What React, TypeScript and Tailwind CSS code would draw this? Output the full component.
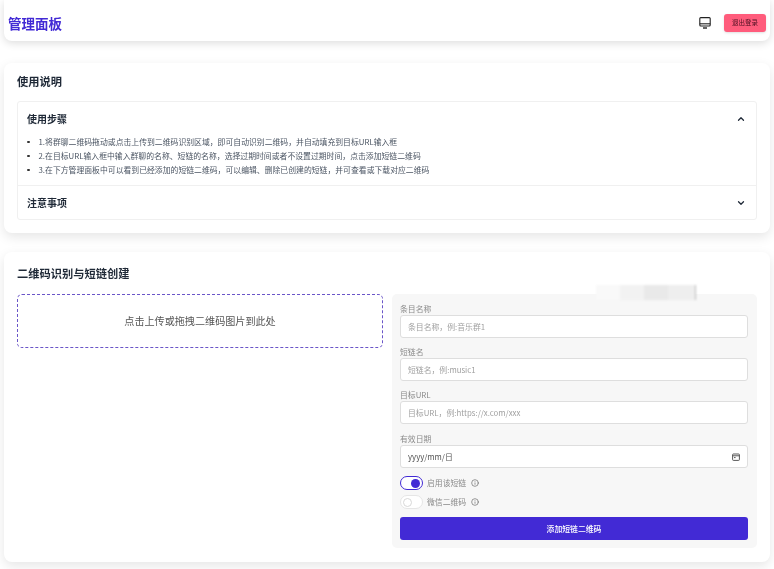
import React from 'react'
import { ChevronDown, ChevronUp, Info } from 'lucide-react'

const steps = [
  '1.将群聊二维码拖动或点击上传到二维码识别区域，即可自动识别二维码，并自动填充到目标URL输入框',
  '2.在目标URL输入框中输入群聊的名称、短链的名称，选择过期时间或者不设置过期时间，点击添加短链二维码',
  '3.在下方管理面板中可以看到已经添加的短链二维码，可以编辑、删除已创建的短链，并可查看或下载对应二维码',
]

function Field({ label, placeholder }: { label: string; placeholder: string }) {
  return (
    <div className="mb-[7px]">
      <div className="h-[13px] text-[7.85px] leading-[13px] text-[#8a8a8a]">{label}</div>
      <input
        readOnly
        placeholder={placeholder}
        className="block h-[23px] w-full rounded-[3px] border border-[#dedede] bg-white px-[7px] text-[7.85px] outline-none placeholder:text-[#a0a0a0]"
      />
    </div>
  )
}

function Toggle({ on, label }: { on?: boolean; label: string }) {
  return (
    <div className="flex h-[14px] items-center">
      {on ? (
        <div className="flex h-[14px] w-[23px] items-center justify-end rounded-full border border-[#422ad5] bg-white pr-[2px]">
          <div className="h-[9px] w-[9px] rounded-full bg-[#422ad5]" />
        </div>
      ) : (
        <div className="flex h-[14px] w-[23px] items-center rounded-full border border-[#e6e6e6] bg-white pl-[2px]">
          <div className="h-[9px] w-[9px] rounded-full border border-[#d8d8d8]" />
        </div>
      )}
      <span className="ml-[4px] text-[7.85px] leading-[14px] text-[#8a8a8a]">{label}</span>
      <Info size={8} className="ml-[5px] text-[#666]" />
    </div>
  )
}

export default function App() {
  return (
    <div className="h-[569px] overflow-hidden bg-white px-[4px] font-['Noto_Sans_CJK_SC','Inter',sans-serif] text-[#1f2937] blur-[0.35px]">
      {/* Navbar */}
      <div className="flex h-[41px] items-center justify-between rounded-b-lg bg-white pl-[4px] pr-[4px] pt-[5px] shadow-[0_2px_8px_rgba(0,0,0,0.14)]">
        <div className="text-[13.5px] font-bold text-[#422ad5]">管理面板</div>
        <div className="flex items-center gap-[13px]">
          <svg width="12" height="12" viewBox="0 0 12 12" fill="none" stroke="#222" strokeWidth="1.1">
            <rect x="0.8" y="0.6" width="10.4" height="8.4" rx="1" />
            <path d="M0.8 6.8h10.4" />
            <path d="M4 11h4" strokeWidth="1.4" />
          </svg>
          <button className="h-[18px] w-[42px] rounded-[3px] bg-[#ff5c7c] text-[6.5px] text-[#4a0f20] shadow-sm">
            退出登录
          </button>
        </div>
      </div>

      {/* Usage */}
      <div className="mt-[22px] h-[170px] rounded-lg bg-white px-[13px] pt-[10px] shadow-[0_4px_12px_rgba(0,0,0,0.1)]">
        <h2 className="text-[11.25px] font-bold leading-[16px]">使用说明</h2>
        <div className="mt-[12px] rounded-[3px] border border-[#f0f0f0]">
          <div className="flex h-[33px] items-center justify-between pl-[9px] pr-[10px]">
            <span className="text-[10px] font-semibold">使用步骤</span>
            <ChevronUp size={10} strokeWidth={3} />
          </div>
          <ul className="h-[50px] pl-[9px]">
            {steps.map((s) => (
              <li key={s} className="flex h-[14px] items-center text-[7.85px] text-[#4b5563]">
                <span className="mr-[9px] h-[2.5px] w-[2.5px] rounded-full bg-[#333]" />
                {s}
              </li>
            ))}
          </ul>
          <div className="flex h-[34px] items-center justify-between border-t border-[#f0f0f0] pl-[9px] pr-[10px]">
            <span className="text-[10px] font-semibold">注意事项</span>
            <ChevronDown size={10} strokeWidth={3} />
          </div>
        </div>
      </div>

      {/* Create */}
      <div className="relative mt-[19px] h-[310px] rounded-lg bg-white px-[13px] pt-[13px] shadow-[0_4px_12px_rgba(0,0,0,0.1)]">
        <h2 className="text-[11.25px] font-bold leading-[16px]">二维码识别与短链创建</h2>
        <div className="mt-[13px] flex gap-[9px]">
          <div className="flex h-[54px] w-[366px] items-center justify-center rounded-[5px] border-[1.5px] border-dashed border-[#6a55c8] text-[10.1px] text-[#555]">
            点击上传或拖拽二维码图片到此处
          </div>
          <div className="h-[254px] w-[365px] rounded-[5px] bg-[#f7f7f7] pl-[8px] pr-[9px] pt-[8px]">
            <Field label="条目名称" placeholder="条目名称，例:音乐群1" />
            <Field label="短链名" placeholder="短链名，例:music1" />
            <Field label="目标URL" placeholder="目标URL，例:https://x.com/xxx" />
            <div className="mb-[8px] mt-[8px]">
              <div className="h-[13px] text-[7.85px] leading-[13px] text-[#8a8a8a]">有效日期</div>
              <div className="flex h-[23px] items-center justify-between rounded-[3px] border border-[#dedede] bg-white px-[7px] text-[7.85px] text-[#555]">
                <span>yyyy/mm/日</span>
                <svg width="8" height="8" viewBox="0 0 8 8" fill="none" stroke="#444" strokeWidth="0.9">
                  <rect x="0.6" y="1" width="6.8" height="6.4" rx="0.8" />
                  <path d="M0.6 2.8h6.8M2 4.6h1.6" />
                </svg>
              </div>
            </div>
            <div className="flex flex-col gap-[5px]">
              <Toggle on label="启用该短链" />
              <Toggle label="微信二维码" />
            </div>
            <button className="mt-[8px] block h-[23px] w-full rounded-[3px] bg-[#422ad5] text-[7.85px] font-medium text-white">
              添加短链二维码
            </button>
          </div>
        </div>
        {/* blurred patch over the panel edge */}
        <div className="absolute left-[592px] top-[33px] flex h-[15px] w-[100px] blur-[1px]">
          <div className="w-[24px] bg-[#f9f9f9]" />
          <div className="w-[24px] bg-[#f2f2f2]" />
          <div className="w-[24px] bg-[#e9e9e9]" />
          <div className="w-[27px] bg-[#eeeeee]" />
          <div className="w-[1px] bg-[#bbbbbb]" />
        </div>
      </div>
    </div>
  )
}
